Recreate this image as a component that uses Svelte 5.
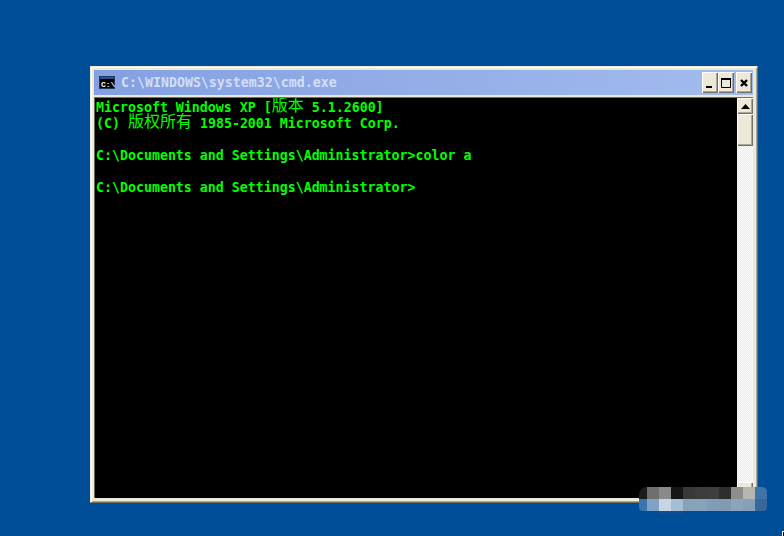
<script lang="ts">
  // each line is split so the Chinese runs can use their own font
  const lines = [
    [
      { text: 'Microsoft Windows XP [' },
      { text: '版本', cjk: true },
      { text: ' 5.1.2600]' }
    ],
    [
      { text: '(C) ' },
      { text: '版权所有', cjk: true },
      { text: ' 1985-2001 Microsoft Corp.' }
    ],
    [],
    [{ text: 'C:\\Documents and Settings\\Administrator>color a' }],
    [],
    [{ text: 'C:\\Documents and Settings\\Administrator>' }]
  ];

  // blurred watermark cells, bottom right
  const topCells = ['#1c1c1c', '#6f6f6f', '#8a8a8a', '#161616', '#383838', '#3c3c3c', '#3e3e3e', '#2e2e2e', '#8e8e8c', '#b8b6b0', '#3f74a8'];
  const bottomCells = ['#3d74ab', '#7fa3c6', '#c8d6e3', '#a6bdd3', '#87a2bb', '#87a2bb', '#809cb6', '#7f9bb4', '#8ba4bb', '#84a0ba', '#36689b'];
</script>

<div class="desktop">
  <div class="window">
    <div class="titlebar">
      <svg class="app-icon" width="16" height="13" viewBox="0 0 16 13">
        <rect width="16" height="13" fill="#1d3a66" />
        <rect x="1" y="1" width="14" height="2" fill="#2f4f8a" />
        <rect x="1" y="3" width="14" height="9" fill="#000" />
        <text x="2" y="10.5" class="icon-text">C:\</text>
      </svg>
      <span class="title">C:\WINDOWS\system32\cmd.exe</span>
      <div class="caption-buttons">
        <button class="cap" aria-label="Minimize">
          <svg class="glyph" width="10" height="10" viewBox="0 0 10 10"><rect x="1" y="8" width="6" height="2" fill="#000" /></svg>
        </button>
        <button class="cap" aria-label="Maximize">
          <svg class="glyph" width="10" height="10" viewBox="0 0 10 10"><path d="M0.5 0.5h9v9h-9z" fill="none" stroke="#000" /><rect width="10" height="2" fill="#000" /></svg>
        </button>
        <button class="cap close" aria-label="Close">
          <svg class="glyph" width="8" height="8" viewBox="0 0 8 8"><path d="M1 1l6 6M7 1l-6 6" stroke="#000" stroke-width="2.4" fill="none" /></svg>
        </button>
      </div>
    </div>
    <div class="client">
      <div class="console">
        {#each lines as line}
          <div class="line">{#each line as part}{#if part.cjk}<span class="cjk">{part.text}</span>{:else}{part.text}{/if}{/each}</div>
        {/each}
      </div>
      <div class="scrollbar">
        <button class="scroll-btn" aria-label="Scroll up">
          <svg width="9" height="5" viewBox="0 0 9 5"><path d="M4.5 0l4.5 5H0z" fill="#000" /></svg>
        </button>
        <div class="thumb"></div>
        <div class="track"></div>
        <button class="scroll-btn" aria-label="Scroll down">
          <svg width="9" height="5" viewBox="0 0 9 5"><path d="M4.5 5L9 0H0z" fill="#000" /></svg>
        </button>
      </div>
    </div>
  </div>

  <div class="mosaic">
    <div class="mosaic-row top">{#each topCells as c}<i style="background: {c}"></i>{/each}</div>
    <div class="mosaic-row bottom">{#each bottomCells as c}<i style="background: {c}"></i>{/each}</div>
    <div class="smudge"></div>
  </div>

  <div class="corner-mark"></div>
</div>

<style>
  :global(body) {
    margin: 0;
    background: #004e98;
  }

  .desktop {
    position: relative;
    width: 784px;
    height: 536px;
    overflow: hidden;
    background: #004e98;
  }

  .window {
    position: absolute;
    left: 90px;
    top: 66px;
    width: 668px;
    height: 437px;
    box-sizing: border-box;
    padding: 3px 4px 4px 3px;
    display: flex;
    flex-direction: column;
    background: #ece9d8;
    border-right: 1px solid #716f64;
    border-bottom: 1px solid #716f64;
    border-top: 1px solid #ece9d8;
    border-left: 1px solid #ece9d8;
    box-shadow: inset 1px 1px 0 #fff, inset -1px -1px 0 #aca899;
  }

  .titlebar {
    height: 25px;
    flex: none;
    display: flex;
    align-items: center;
    padding: 0 1px 0 5px;
    background: linear-gradient(90deg, #84a0e2, #a2bcee);
    box-sizing: border-box;
  }

  .app-icon {
    flex: none;
    margin-right: 6px;
  }

  .icon-text {
    font: bold 8px 'Liberation Mono', monospace;
    fill: #fff;
  }

  .title {
    margin-top: 1px;
    font: bold 13.28px / 16px 'DejaVu Sans Mono', monospace;
    color: #d3def6;
    white-space: pre;
  }

  .caption-buttons {
    margin-left: auto;
    display: flex;
  }

  .cap {
    width: 16px;
    height: 21px;
    padding: 0;
    display: flex;
    align-items: center;
    justify-content: center;
    background: #ece9d8;
    border: 0;
    box-shadow: inset 1px 1px 0 #fff, inset -1px -1px 0 #716f64, inset -2px -2px 0 #aca899;
  }

  .close {
    margin-left: 2px;
  }

  .client {
    flex: 1;
    min-height: 0;
    display: flex;
    margin-top: 2px;
    border-top: 1px solid #716f64;
    border-left: 1px solid #716f64;
  }

  .console {
    flex: 1;
    padding: 2px 0 0 1px;
    background: #000;
    color: #00ff00;
    font: bold 13.28px / 16px 'DejaVu Sans Mono', monospace;
    white-space: pre;
    overflow: hidden;
  }

  .line {
    min-height: 16px;
  }

  .cjk {
    font: 400 16px / 0 'Noto Sans CJK SC', sans-serif;
    vertical-align: 1px;
  }

  .scrollbar {
    width: 16px;
    flex: none;
    display: flex;
    flex-direction: column;
  }

  .scroll-btn {
    height: 16px;
    flex: none;
    padding: 0;
    display: flex;
    align-items: center;
    justify-content: center;
    background: #ece9d8;
    border: 0;
    box-shadow: inset 1px 1px 0 #fff, inset -1px -1px 0 #716f64, inset -2px -2px 0 #aca899;
  }

  .thumb {
    height: 32px;
    flex: none;
    background: #ece9d8;
    box-shadow: inset 1px 1px 0 #fff, inset -1px -1px 0 #716f64, inset -2px -2px 0 #aca899;
  }

  .track {
    flex: 1;
    background: repeating-conic-gradient(#fff 0 25%, #ece9d8 0 50%) 0 0 / 2px 2px;
  }

  .mosaic {
    position: absolute;
    left: 639px;
    top: 487px;
    width: 128px;
  }

  .mosaic-row {
    display: flex;
    height: 12px;
    overflow: hidden;
  }

  .mosaic-row.top {
    border-radius: 8px 5px 0 0;
  }

  .mosaic-row.bottom {
    border-radius: 0 0 4px 4px;
  }

  .mosaic-row i {
    width: 12px;
    flex: none;
  }

  .mosaic-row i:first-child {
    width: 8px;
  }

  .smudge {
    height: 3px;
    width: 24px;
    margin-left: 20px;
    background: #0f4f90;
  }

  .corner-mark {
    position: absolute;
    right: 0;
    bottom: 0;
    width: 1px;
    height: 4px;
    background: #000;
    border-top: 1px solid #fff;
    border-left: 1px solid #fff;
  }
</style>
